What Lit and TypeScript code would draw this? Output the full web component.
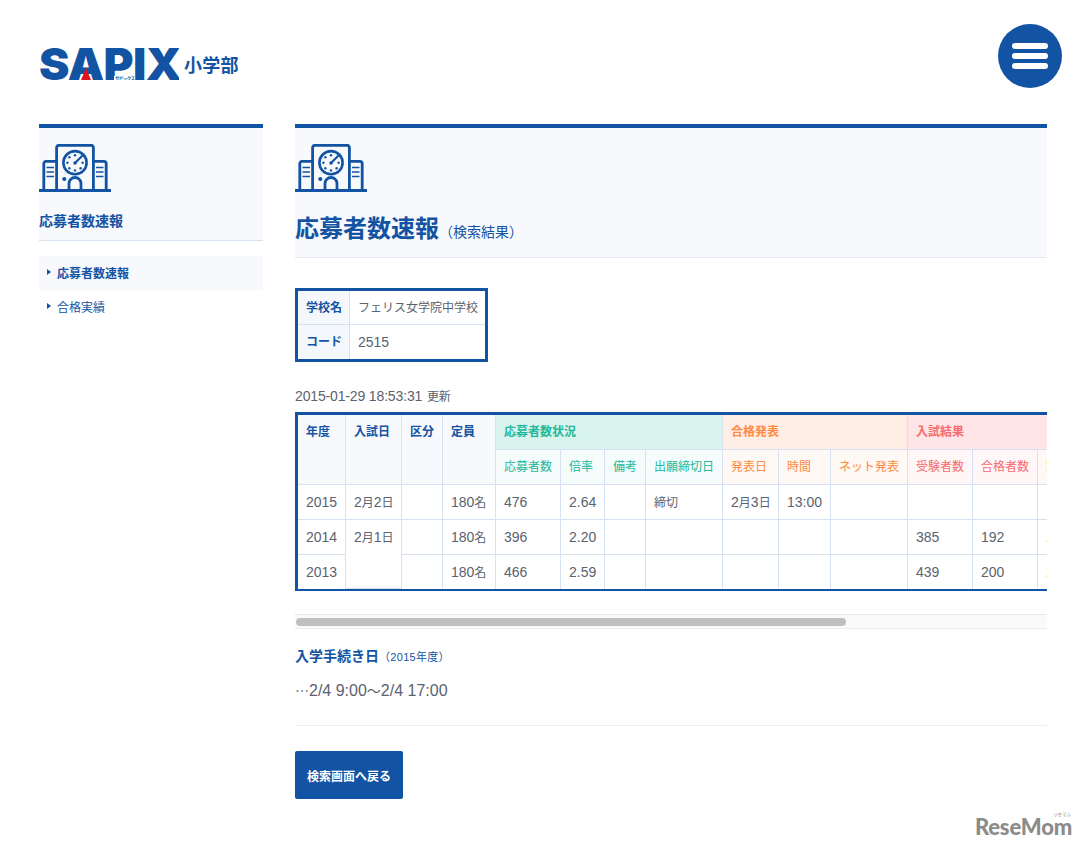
import { LitElement, html, css, svg } from "lit";
import { customElement } from "lit/decorators.js";

const building = svg`
  <g fill="none" stroke="#1353a3" stroke-width="2.8" stroke-linejoin="round">
    <path d="M17.6 46V3.5a2.2 2.2 0 0 1 2.2-2.2h32.4a2.2 2.2 0 0 1 2.2 2.2V46" />
    <path d="M17.6 17.4H7a2.2 2.2 0 0 0-2.2 2.2V46" />
    <path d="M54.4 17.4H65a2.2 2.2 0 0 1 2.2 2.2V46" />
    <circle cx="36" cy="18.7" r="11.6" stroke-width="2.6" />
    <path d="M30 46V39.5a6 6 0 0 1 12 0V46" />
  </g>
  <rect x="0" y="45" width="72" height="3" fill="#1353a3" />
  <g stroke="#1353a3" stroke-width="1.5">
    <path d="M7.5 23.5h7.5M7.5 28h7.5M7.5 32.5h7.5M57 23.5h7.5M57 28h7.5M57 32.5h7.5" />
  </g>
  <path d="M36 19l7-7" stroke="#1353a3" stroke-width="2.2" stroke-linecap="round" />
  <g fill="#1353a3">
    <circle cx="36" cy="11.2" r="1.2" /><circle cx="30.4" cy="13.2" r="1.2" /><circle cx="28.4" cy="18.7" r="1.2" />
    <circle cx="30.4" cy="24.2" r="1.2" /><circle cx="36" cy="26.4" r="1.2" /><circle cx="41.6" cy="24.2" r="1.2" />
    <circle cx="43.6" cy="18.7" r="1.2" /><circle cx="36" cy="19" r="1.7" /><circle cx="25.3" cy="35" r="2.1" />
  </g>`;

const icon = html`<svg class="bicon" viewBox="0 0 72 48" width="72" height="48">${building}</svg>`;

const widths = [48, 56, 41, 53, 65, 44, 41, 77, 56, 52, 77, 65, 65, 65, 65, 65, 62];

const rows = [
  ["2015", "2月2日", "", "180名", "476", "2.64", "", "締切", "2月3日", "13:00", "", "", "", "", "", "", ""],
  ["2014", "2月1日", "", "180名", "396", "2.20", "", "", "", "", "", "385", "192", "2.01", "", "", ""],
  ["2013", null, "", "180名", "466", "2.59", "", "", "", "", "", "439", "200", "2.20", "", "", ""],
];

/* Latin runs stay at the cell's size, CJK runs are set in the smaller .j size. */
const mixed = (s: string) =>
  s.split(/([^\x00-\x7f]+)/).map((p, i) => (i % 2 ? html`<span class="j">${p}</span>` : p));

@customElement("app-root")
export class AppRoot extends LitElement {
  static styles = css`
    :host {
      display: block;
      position: relative;
      width: 1086px;
      height: 850px;
      overflow: hidden;
      background: #fff;
      font-family: "Liberation Sans", "Noto Sans CJK JP", sans-serif;
      color: #5b6270;
      --blue: #1353a3;
      --line: #d6e1f2;
      --pale: #f7f9fd;
    }
    .j { font-family: "Noto Sans CJK JP", sans-serif; font-size: 12px; }
    .bicon { display: block; }
    header {
      display: flex;
      justify-content: space-between;
      align-items: flex-start;
      height: 124px;
      box-sizing: border-box;
      padding: 24px 24px 0 39px;
    }
    .logo {
      display: flex;
      align-items: center;
      margin-top: 24px;
      height: 32px;
      position: relative;
    }
    .sapix {
      position: relative;
      width: 140px;
      height: 32px;
      overflow: hidden;
      color: var(--blue);
      font-family: Inter, "Liberation Sans", sans-serif;
      font-weight: 900;
      font-size: 44px;
      line-height: 32px;
      letter-spacing: -0.5px;
      white-space: nowrap;
    }
    .sapix span.word { display: block; transform-origin: 0 50%; transform: scaleX(1.04); }
    .tri {
      position: absolute;
      left: 42px;
      top: 20px;
      width: 0;
      height: 0;
      border-left: 5.5px solid transparent;
      border-right: 5.5px solid transparent;
      border-bottom: 12px solid #e1141c;
    }
    .kana {
      position: absolute;
      left: 75px;
      bottom: 0;
      font: 700 4.4px/4.5px "Noto Sans CJK JP", sans-serif;
      color: var(--blue);
      background: #fff;
      padding: 0 1px;
    }
    .sub {
      margin-left: 5px;
      color: var(--blue);
      font: 700 18px/32px "Noto Sans CJK JP", sans-serif;
      letter-spacing: 0.3px;
    }
    .burger {
      width: 64px;
      height: 64px;
      border-radius: 50%;
      background: var(--blue);
      display: flex;
      flex-direction: column;
      justify-content: center;
      align-items: center;
      gap: 4.5px;
    }
    .burger i {
      display: block;
      width: 36px;
      height: 5.5px;
      border-radius: 3px;
      background: #fff;
    }
    .body {
      display: flex;
      gap: 32px;
      padding: 0 39px;
    }
    aside { width: 224px; flex: none; }
    .side-head {
      border-top: 4px solid var(--blue);
      border-bottom: 1px solid var(--line);
      background: var(--pale);
      height: 96px;
      padding-top: 16px;
    }
    .side-title {
      margin: 19px 0 0;
      color: var(--blue);
      font: 700 14px/20px "Liberation Sans", "Noto Sans CJK JP", sans-serif;
    }
    nav { margin-top: 15px; }
    .item {
      display: flex;
      align-items: center;
      height: 34px;
      box-sizing: border-box;
      padding: 0 0 2px 8px;
      gap: 6px;
      color: var(--blue);
      font-size: 12px;
    }
    .item.on { background: var(--pale); font-weight: 700; }
    .item::before {
      content: "";
      border-left: 4px solid var(--blue);
      border-top: 3px solid transparent;
      border-bottom: 3px solid transparent;
    }
    main { width: 752px; flex: none; min-width: 0; }
    .main-head {
      border-top: 4px solid var(--blue);
      border-bottom: 1px solid #e6e9f1;
      background: var(--pale);
      padding: 16px 0 11px;
    }
    h1 {
      margin: 20px 0 0;
      height: 34px;
      color: var(--blue);
      font: 700 24px/34px "Liberation Sans", "Noto Sans CJK JP", sans-serif;
    }
    h1 small {
      font-size: 14px;
      font-weight: 400;
    }
    table { border-spacing: 0; border-collapse: separate; }
    .school {
      margin-top: 30px;
      border: 3px solid var(--blue);
      width: 193px;
      table-layout: fixed;
    }
    .school th, .school td {
      height: 34px;
      padding: 0 8px;
      box-sizing: border-box;
      font-size: 12px;
      line-height: 18px;
      text-align: left;
      white-space: nowrap;
      border-bottom: 1px solid var(--line);
    }
    .school tr:last-child th, .school tr:last-child td { border-bottom: 0; }
    .school th {
      width: 52px;
      color: var(--blue);
      background: #f4f7fc;
      border-right: 1px solid var(--line);
      font-weight: 700;
    }
    .school td.num { font-size: 14px; }
    .stamp {
      margin: 26px 0 8px;
      font-size: 14px;
      line-height: 16px;
      letter-spacing: -0.15px;
    }
    .stamp .j { margin-left: 1px; }
    .scroller { width: 752px; overflow: hidden; }
    .data {
      table-layout: fixed;
      border: 3px solid var(--blue);
      border-bottom-width: 2.5px;
      width: 1003px;
    }
    .data th, .data td {
      box-sizing: border-box;
      height: 35px;
      padding: 0 8px;
      font-size: 14px;
      line-height: 18px;
      text-align: left;
      font-weight: 400;
      white-space: nowrap;
      overflow: hidden;
      border-right: 1px solid var(--line);
      border-bottom: 1px solid var(--line);
    }
    .data tbody tr:last-child td { border-bottom: 0; height: 34px; }
    .data td.span2 { vertical-align: top; padding-top: 8px; }
    .data thead th { font-size: 12px; }
    .data th.base {
      color: var(--blue);
      background: var(--pale);
      font-weight: 700;
      vertical-align: top;
      padding-top: 8px;
    }
    .data th.band { font-weight: 700; }
    .g { color: #20b99b; }
    .o { color: #ff8a42; }
    .r { color: #f76b70; }
    .band.g { background: #d9f3ee; }
    .band.o { background: #ffeee5; }
    .band.r { background: #ffe5e6; }
    .s.g { background: #f6fcfc; }
    .s.o { background: #fff9f5; }
    .s.r { background: #fff7f7; }
    td.res { color: #ff8a42; }
    .track {
      margin-top: 23px;
      height: 15px;
      box-sizing: border-box;
      background: #fafafa;
      border-top: 1px solid #e8e8e8;
      border-bottom: 1px solid #ececec;
      padding: 3px 0 0 1px;
    }
    .thumb {
      width: 550px;
      height: 8px;
      border-radius: 4px;
      background: #bfbfbf;
    }
    h2 {
      margin: 17px 0 0;
      height: 20px;
      color: var(--blue);
      font: 700 14px/20px "Liberation Sans", "Noto Sans CJK JP", sans-serif;
    }
    h2 small {
      font-size: 11px;
      font-weight: 400;
      letter-spacing: 0.3px;
    }
    .proc {
      margin: 12px 0 0;
      height: 24px;
      font-size: 16px;
      line-height: 24px;
    }
    .proc .j { font-size: 14px; }
    hr {
      border: 0;
      border-top: 1px solid #eeeeee;
      margin: 23px 0 0;
    }
    .back {
      display: flex;
      align-items: center;
      justify-content: center;
      margin-top: 25px;
      width: 108px;
      height: 48px;
      border-radius: 2px;
      background: var(--blue);
      color: #fff;
      font-size: 12px;
      font-weight: 700;
    }
    .mark {
      position: absolute;
      right: 14px;
      bottom: 11px;
      color: #8b8b8b;
      font: 900 22px/24px Lato, "Liberation Sans", sans-serif;
      letter-spacing: -0.2px;
    }
    .mark small {
      position: absolute;
      right: 1px;
      top: -4px;
      font: 400 4.5px/6px "Noto Sans CJK JP", sans-serif;
      letter-spacing: 0;
    }
  `;

  render() {
    return html`
      <header>
        <div class="logo">
          <div class="sapix">
            <span class="word">SAPIX</span>
            <span class="tri"></span>
            <span class="kana">サピックス</span>
          </div>
          <span class="sub">小学部</span>
        </div>
        <div class="burger"><i></i><i></i><i></i></div>
      </header>
      <div class="body">
        <aside>
          <div class="side-head">
            ${icon}
            <p class="side-title">応募者数速報</p>
          </div>
          <nav>
            <div class="item on">応募者数速報</div>
            <div class="item">合格実績</div>
          </nav>
        </aside>
        <main>
          <div class="main-head">
            ${icon}
            <h1>応募者数速報<small>（検索結果）</small></h1>
          </div>
          <table class="school">
            <tr><th>学校名</th><td>フェリス女学院中学校</td></tr>
            <tr><th>コード</th><td class="num">2515</td></tr>
          </table>
          <p class="stamp">${mixed("2015-01-29 18:53:31 更新")}</p>
          <div class="scroller">
            <table class="data">
              <colgroup>${widths.map((w) => html`<col style="width:${w}px" />`)}</colgroup>
              <thead>
                <tr>
                  <th class="base" rowspan="2">年度</th>
                  <th class="base" rowspan="2">入試日</th>
                  <th class="base" rowspan="2">区分</th>
                  <th class="base" rowspan="2">定員</th>
                  <th class="band g" colspan="4">応募者数状況</th>
                  <th class="band o" colspan="3">合格発表</th>
                  <th class="band r" colspan="6">入試結果</th>
                </tr>
                <tr>
                  <th class="s g">応募者数</th>
                  <th class="s g">倍率</th>
                  <th class="s g">備考</th>
                  <th class="s g">出願締切日</th>
                  <th class="s o">発表日</th>
                  <th class="s o">時間</th>
                  <th class="s o">ネット発表</th>
                  <th class="s r">受験者数</th>
                  <th class="s r">合格者数</th>
                  <th class="s o">実質倍率</th>
                  <th class="s o">最高点</th>
                  <th class="s o">最低点</th>
                  <th class="s o">平均点</th>
                </tr>
              </thead>
              <tbody>
                ${rows.map(
                  (r) => html`<tr>
                    ${r.map((c, i) => {
                      if (c === null) return null;
                      if (i === 1 && c === "2月1日") return html`<td class="span2" rowspan="2">${mixed(c)}</td>`;
                      return html`<td class=${i >= 13 ? "res" : ""}>${mixed(c)}</td>`;
                    })}
                  </tr>`
                )}
              </tbody>
            </table>
          </div>
          <div class="track"><div class="thumb"></div></div>
          <h2>入学手続き日<small>（2015年度）</small></h2>
          <p class="proc">${mixed("…2/4 9:00〜2/4 17:00")}</p>
          <hr />
          <div class="back">検索画面へ戻る</div>
        </main>
      </div>
      <div class="mark">ReseMom<small>リセマム</small></div>
    `;
  }
}
